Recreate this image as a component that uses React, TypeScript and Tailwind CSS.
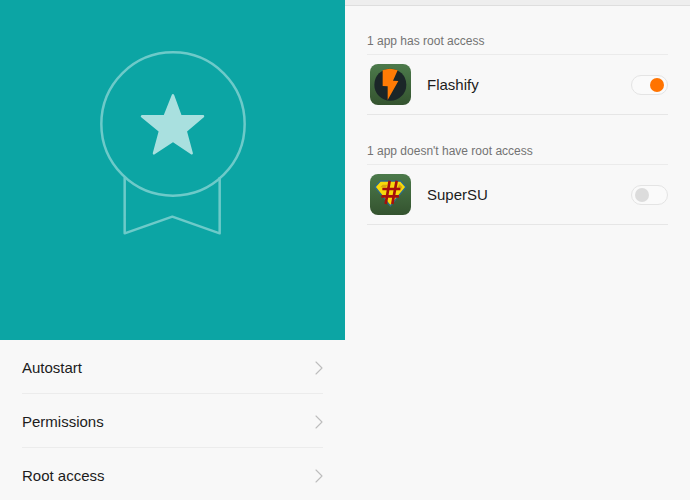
import { ChevronRight } from "lucide-react";
import type { ReactNode } from "react";

const menu = ["Autostart", "Permissions", "Root access"];

export default function App() {
    return (
        <div className="grid min-h-screen grid-cols-2 bg-[#f8f8f8] font-['Liberation_Sans',Arial,sans-serif] text-[15px] text-[#1c1c1c]">
            <div>
                <div className="flex h-[340px] justify-center bg-[#0ca5a4] pt-10">
                    <Ribbon />
                </div>
                <nav className="px-[22px]">
                    {menu.map((item) => (
                        <a
                            key={item}
                            href="#"
                            className="flex items-center justify-between border-b border-[#ececec] pt-4 pb-[13px] leading-6 last:border-b-0 last:pb-3"
                        >
                            {item}
                            <Chevron />
                        </a>
                    ))}
                </nav>
            </div>
            <main>
                <div className="h-1.5 border-b border-[#dedede] bg-[#eeeeee]" />
                <div className="flex flex-col gap-[26px] px-[22px] pt-[25px]">
                    <AppSection
                        title="1 app has root access"
                        name="Flashify"
                        icon={<FlashifyIcon />}
                        enabled
                    />
                    <AppSection
                        title="1 app doesn't have root access"
                        name="SuperSU"
                        icon={<SuperSUIcon />}
                    />
                </div>
            </main>
        </div>
    );
}

function AppSection({
    title,
    name,
    icon,
    enabled = false,
}: {
    title: string;
    name: string;
    icon: ReactNode;
    enabled?: boolean;
}) {
    return (
        <section>
            <h2 className="border-b border-[#ebebeb] pb-[3px] text-xs leading-5 text-[#737373]">
                {title}
            </h2>
            <label className="flex items-center border-b border-[#e6e6e6] py-[9px] pl-[3px]">
                {icon}
                <span className="ml-4 grow pt-0.5">{name}</span>
                <input
                    type="checkbox"
                    defaultChecked={enabled}
                    className="flex h-5 w-[37px] appearance-none items-center rounded-full border border-[#e4e4e4] bg-[#fafafa] px-[3px] before:size-[14px] before:rounded-full before:bg-[#dcdcdc] checked:justify-end checked:before:bg-[#ff7300]"
                />
            </label>
        </section>
    );
}

function Chevron() {
    return (
        <ChevronRight
            className="h-6 w-2 text-[#bdbdbd]"
            viewBox="8 0 8 24"
            strokeWidth={1.1}
        />
    );
}

function Ribbon() {
    return (
        <svg
            className="h-[200px] w-[170px]"
            viewBox="-6 0 510 600"
            fill="none"
            stroke="#6dcac9"
            strokeWidth="7.5"
            strokeLinejoin="round"
        >
            <circle cx="249" cy="252" r="215" />
            <path d="M104 412v168l143-50 142 50V412" />
            <path
                d="M249 166l23 63h67l-52 44 18 67-56-38-57 38 18-67-54-44h68z"
                fill="#a9e0df"
                stroke="#a9e0df"
            />
        </svg>
    );
}

function FlashifyIcon() {
    return (
        <svg className="size-[41px]" viewBox="0 0 123 123">
            <IconBase id="flashify-bg" />
            <circle cx="61" cy="62" r="48" fill="#1b2628" />
            <path
                d="M38 19Q60 10 83 19L69 50l16 1-32 57V67l-15-1z"
                fill="#ff7b05"
            />
        </svg>
    );
}

function SuperSUIcon() {
    return (
        <svg className="size-[41px]" viewBox="0 0 123 123">
            <IconBase id="supersu-bg" />
            <path
                d="M31 21h61l16 18-47 57-46-57z"
                fill="#f6d90c"
                stroke="#2c6b86"
                strokeWidth="4"
            />
            <path d="M38 32h14l-4 8H31zM88 30l9 9-6 8-9-5z" fill="#d8a60c" />
            <path
                d="M59 20L47 90M80 20L67 90M37 45h54M34 67h53"
                fill="none"
                stroke="#a50f0c"
                strokeWidth="8"
            />
        </svg>
    );
}

// Rounded green tile behind every app icon
function IconBase({ id }: { id: string }) {
    return (
        <>
            <linearGradient id={id} x1="0" y1="0" x2="0" y2="1">
                <stop offset="0" stopColor="#4c7a4b" />
                <stop offset="1" stopColor="#34532f" />
            </linearGradient>
            <rect width="123" height="123" rx="24" fill={`url(#${id})`} />
        </>
    );
}
